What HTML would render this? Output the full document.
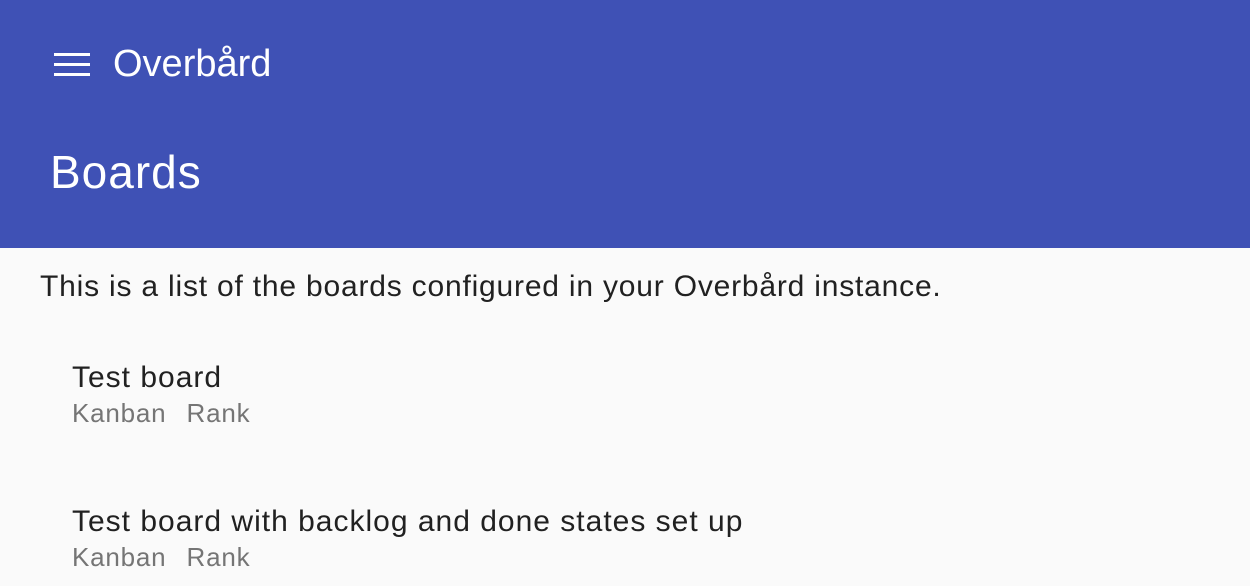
<!DOCTYPE html>
<html><head><style>
body{margin:0;width:1250px;height:586px;overflow:hidden;background:#fafafa;font-family:"Liberation Sans",sans-serif;}
.hdr{position:absolute;left:0;top:0;width:1250px;height:248px;background:#3f51b5;color:#fff;}
.ham{position:absolute;left:54px;width:36px;height:3px;background:#fff;}
.t1{position:absolute;left:113px;top:40px;font-size:38px;line-height:48px;white-space:nowrap;}
.t2{position:absolute;left:50px;top:144px;font-size:46px;line-height:56px;white-space:nowrap;letter-spacing:1px;}
.p{position:absolute;left:40px;top:268px;font-size:30px;line-height:38px;color:#212121;white-space:nowrap;letter-spacing:0.8px;}
.b{position:absolute;left:72px;font-size:30px;line-height:36px;color:#212121;white-space:nowrap;letter-spacing:1px;}
.s{position:absolute;left:72px;font-size:26px;line-height:32px;color:#757575;white-space:nowrap;letter-spacing:0.8px;word-spacing:2px;}
</style></head><body>
<div class="hdr">
<div class="ham" style="top:53px"></div><div class="ham" style="top:63px"></div><div class="ham" style="top:73px"></div>
<div class="t1">Overbård</div>
<div class="t2">Boards</div>
</div>
<div class="p">This is a list of the boards configured in your Overbård instance.</div>
<div class="b" style="top:360px">Test board</div>
<div class="s" style="top:397px">Kanban&nbsp; Rank</div>
<div class="b" style="top:504px">Test board with backlog and done states set up</div>
<div class="s" style="top:541px">Kanban&nbsp; Rank</div>
</body></html>
